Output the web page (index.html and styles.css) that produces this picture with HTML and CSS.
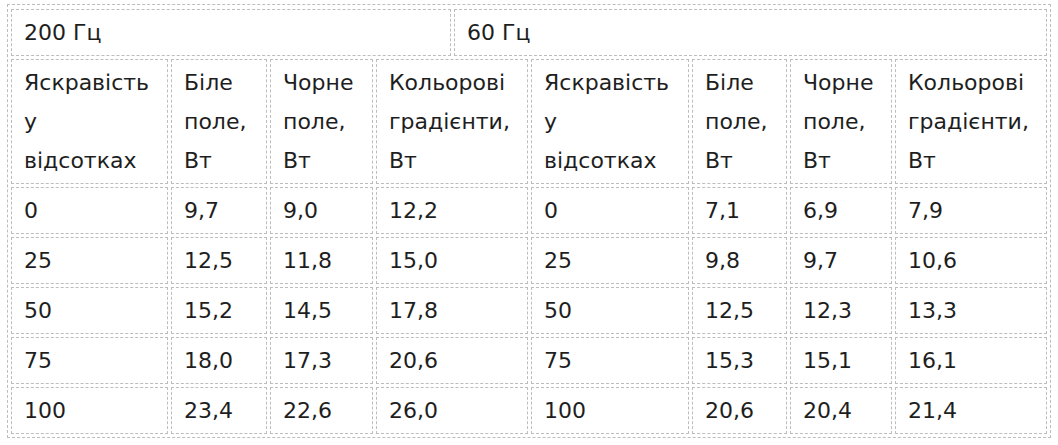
FILE: index.html
```html
<!DOCTYPE html>
<html lang="uk">
<head>
<meta charset="utf-8">
<title>Споживання</title>
<link rel="stylesheet" href="styles.css">
</head>
<body>
<div class="frame">
  <div class="freq-row">
    <div class="cell freq freq-a">200 Гц</div>
    <div class="cell freq freq-b">60 Гц</div>
  </div>
  <table class="data">
    <colgroup>
      <col class="c1"><col class="c2"><col class="c3"><col class="c4">
      <col class="c5"><col class="c6"><col class="c7"><col class="c8">
    </colgroup>
    <tr>
      <td>Яскравість у відсотках</td><td>Біле поле, Вт</td><td>Чорне поле, Вт</td><td>Кольорові градієнти, Вт</td>
      <td>Яскравість у відсотках</td><td>Біле поле, Вт</td><td>Чорне поле, Вт</td><td>Кольорові градієнти, Вт</td>
    </tr>
    <tr><td>0</td><td>9,7</td><td>9,0</td><td>12,2</td><td>0</td><td>7,1</td><td>6,9</td><td>7,9</td></tr>
    <tr><td>25</td><td>12,5</td><td>11,8</td><td>15,0</td><td>25</td><td>9,8</td><td>9,7</td><td>10,6</td></tr>
    <tr><td>50</td><td>15,2</td><td>14,5</td><td>17,8</td><td>50</td><td>12,5</td><td>12,3</td><td>13,3</td></tr>
    <tr><td>75</td><td>18,0</td><td>17,3</td><td>20,6</td><td>75</td><td>15,3</td><td>15,1</td><td>16,1</td></tr>
    <tr><td>100</td><td>23,4</td><td>22,6</td><td>26,0</td><td>100</td><td>20,6</td><td>20,4</td><td>21,4</td></tr>
  </table>
</div>
</body>
</html>
```

FILE: styles.css
```css
html, body {
  margin: 0;
  padding: 0;
  background: #ffffff;
}

body {
  font-family: "DejaVu Sans", Verdana, sans-serif;
  font-size: 22px;
  line-height: 39px;
  color: #1e1e1e;
}

.frame {
  box-sizing: border-box;
  width: 1044px;
  margin: 4px 0 0 7px;
  padding: 4px 3px 3px 3px;
  border: 1px dashed #bdbdbd;
  display: flex;
  flex-direction: column;
  gap: 3px;
}

.freq-row {
  display: flex;
  gap: 3px;
}

.cell {
  box-sizing: border-box;
  border: 1px dashed #bdbdbd;
  padding: 3px 12px;
}

.freq-a {
  width: 440px;
}

.freq-b {
  flex: 1;
}

.data {
  table-layout: fixed;
  width: calc(100% + 6px);
  margin: -3px;
  border-collapse: separate;
  border-spacing: 3px;
}

.data td {
  box-sizing: border-box;
  border: 1px dashed #bdbdbd;
  padding: 3px 13px 3px 12px;
  vertical-align: top;
  text-align: left;
}

.c1 { width: 157px; }
.c2 { width: 96px; }
.c3 { width: 103px; }
.c4 { width: 152px; }
.c5 { width: 158px; }
.c6 { width: 95px; }
.c7 { width: 102px; }
.c8 { width: 152px; }
```
